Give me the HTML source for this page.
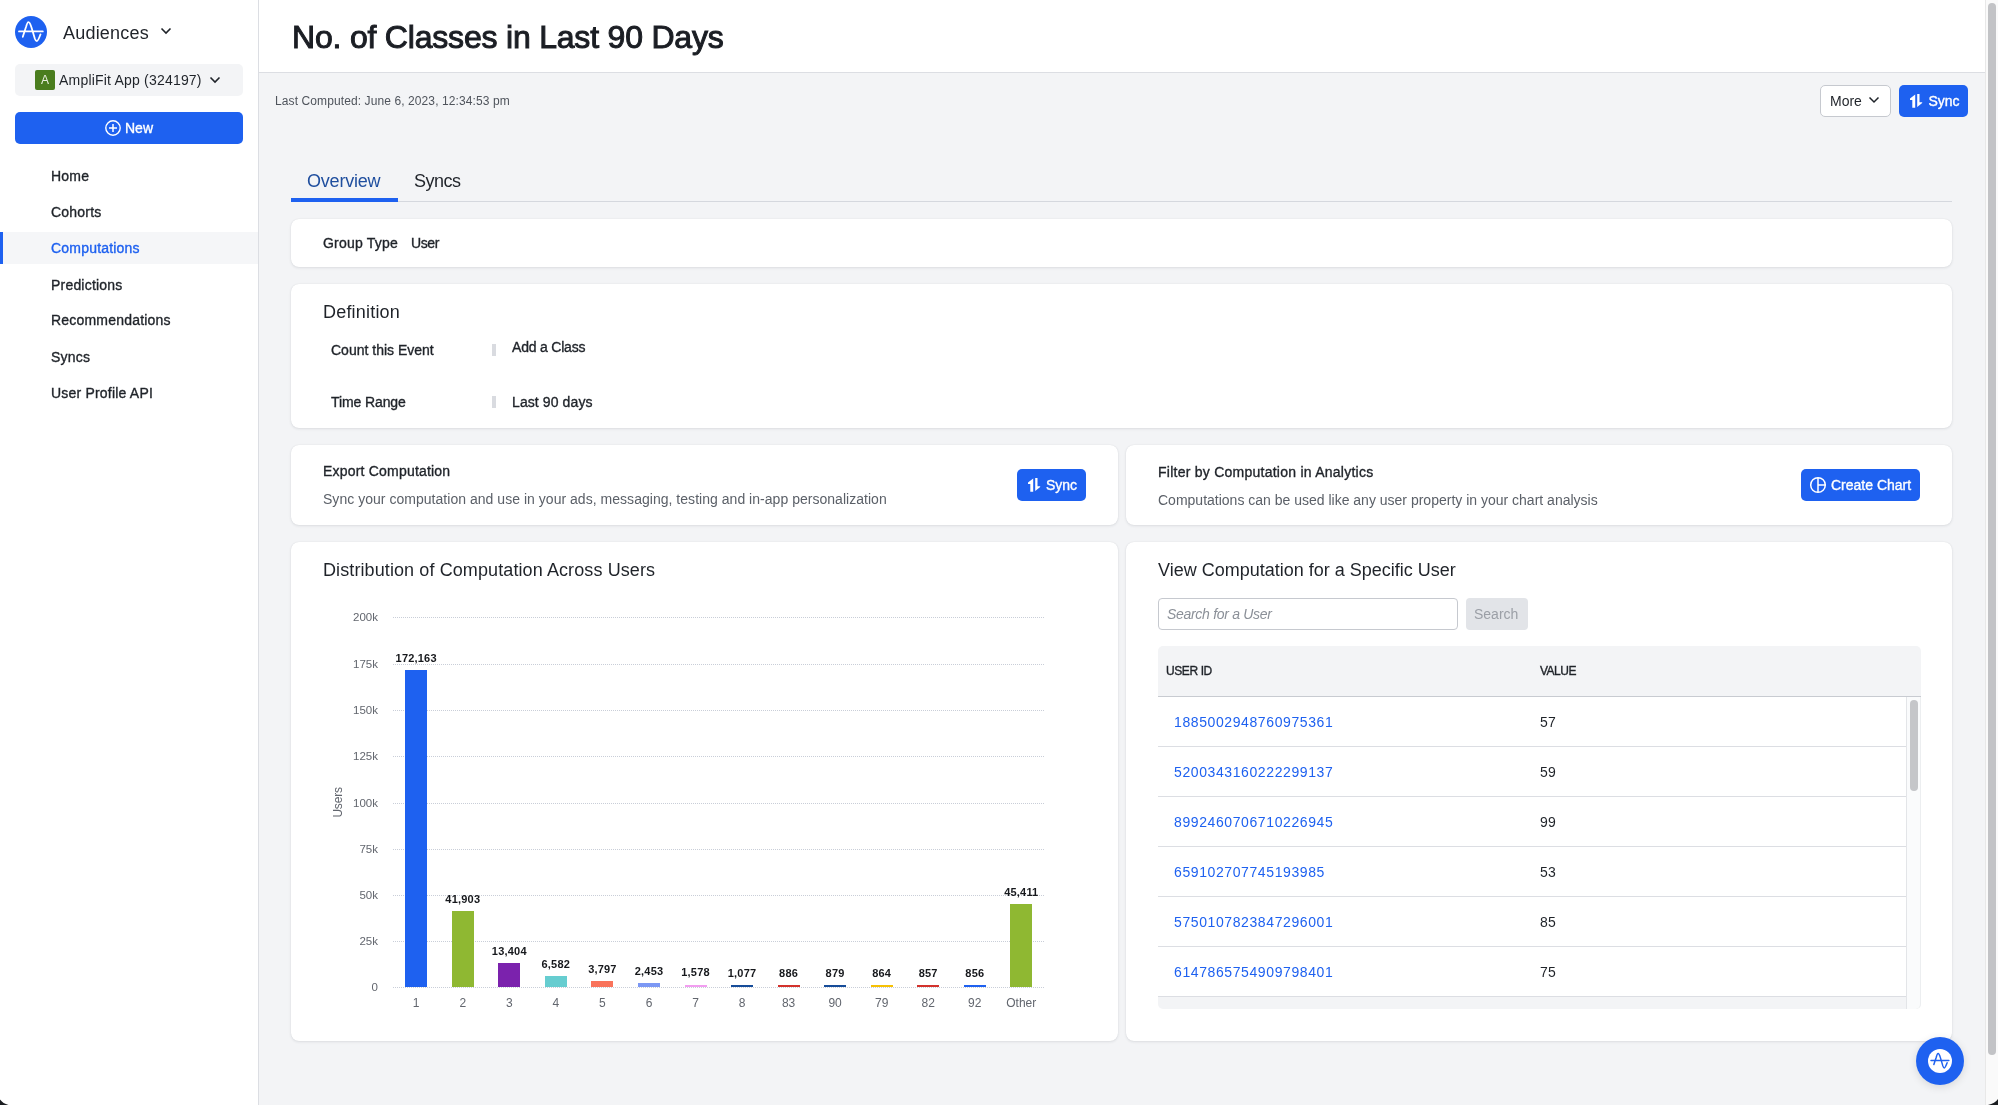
<!DOCTYPE html>
<html><head><meta charset="utf-8">
<style>
*{box-sizing:border-box;margin:0;padding:0}
html,body{width:1998px;height:1105px;overflow:hidden;will-change:transform;background:#f3f4f6;font-family:"Liberation Sans",sans-serif;color:#1f2329}
.a{position:absolute;white-space:nowrap;line-height:1}
.med{-webkit-text-stroke:0.35px currentColor}
#side{position:absolute;left:0;top:0;width:259px;height:1105px;background:#fff;border-right:1px solid #dcdee3}
#hdr{position:absolute;left:259px;top:0;width:1726px;height:73px;background:#fff;border-bottom:1px solid #dcdee3}
.card{position:absolute;background:#fff;border-radius:8px;box-shadow:0 1px 3px rgba(30,40,60,.10),0 0 1px rgba(30,40,60,.12)}
.btn{position:absolute;background:#1e61f0;border-radius:5px;color:#fff}
.nav{position:absolute;left:51px;font-size:14px;line-height:1;color:#1f2329;letter-spacing:0.2px}
.grid{position:absolute;left:393px;width:651px;height:0;border-top:1px dotted #c9ced8}
.yl{position:absolute;right:0;width:60px;text-align:right;font-size:11.5px;color:#62666e;line-height:1}
.bar{position:absolute;width:22px}
.vl{position:absolute;width:60px;text-align:center;font-size:11px;font-weight:bold;color:#16181c;line-height:1;letter-spacing:0.2px}
.xl{position:absolute;width:60px;text-align:center;font-size:12px;color:#62666e;line-height:1}
.row{position:absolute;left:1158px;width:748px;height:50px;border-bottom:1px solid #dcdee3}
.uid{position:absolute;left:16px;font-size:14px;color:#1e61f0;line-height:1;letter-spacing:0.5px}
.val{position:absolute;left:382px;font-size:14px;color:#1f2329;line-height:1;letter-spacing:0.3px}
</style></head>
<body>
<!-- SIDEBAR -->
<div id="side">
  <svg style="position:absolute;left:15px;top:16px" width="32" height="32" viewBox="0 0 32 32">
    <circle cx="16" cy="16" r="16" fill="#1e61f0"/>
    <path d="M4 15.4 H27.8 M7.8 20.8 L11 11 C11.8 8 12.5 6.1 13.5 6.1 C14.8 6.1 15.6 8.5 16.5 11.5 L19.8 22.5 C20.5 24.5 21 25.2 21.8 25.2 C23 25.2 24.5 21 25.5 18.4" stroke="#fff" stroke-width="1.8" fill="none" stroke-linecap="round" stroke-linejoin="round"/>
  </svg>
  <div class="a" style="left:63px;top:23.6px;font-size:18px;color:#1f2329;letter-spacing:0.2px">Audiences</div>
  <svg style="position:absolute;left:160px;top:27px" width="12" height="8" viewBox="0 0 12 8"><path d="M1.5 1.5 L6 6 L10.5 1.5" stroke="#1f2329" stroke-width="1.6" fill="none"/></svg>
  <div style="position:absolute;left:15px;top:64px;width:228px;height:32px;background:#f3f4f6;border-radius:5px"></div>
  <div style="position:absolute;left:35px;top:70px;width:20px;height:20px;background:#4a7d1e;border-radius:2px;color:#e8eee0;font-size:12px;line-height:20px;text-align:center">A</div>
  <div class="a" style="left:59px;top:73.1px;font-size:14px;letter-spacing:0.2px">AmpliFit App (324197)</div>
  <svg style="position:absolute;left:209px;top:76px" width="12" height="8" viewBox="0 0 12 8"><path d="M1.5 1.5 L6 6 L10.5 1.5" stroke="#1f2329" stroke-width="1.6" fill="none"/></svg>
  <div class="btn" style="left:15px;top:112px;width:228px;height:32px;border-radius:5px"></div>
  <svg style="position:absolute;left:105px;top:120px" width="16" height="16" viewBox="0 0 16 16"><circle cx="8" cy="8" r="7.2" stroke="#fff" stroke-width="1.4" fill="none"/><path d="M8 4 V12 M4 8 H12" stroke="#fff" stroke-width="1.5"/></svg>
  <div class="a med" style="left:125px;top:121.1px;font-size:14px;color:#fff">New</div>

  <div style="position:absolute;left:0;top:232px;width:258px;height:32px;background:#f5f6f8"></div>
  <div style="position:absolute;left:0;top:232px;width:3px;height:32px;background:#1e61f0"></div>
  <div class="nav med" style="top:169.1px">Home</div>
  <div class="nav med" style="top:205.3px">Cohorts</div>
  <div class="nav med" style="top:241.3px;color:#1e61f0">Computations</div>
  <div class="nav med" style="top:277.5px">Predictions</div>
  <div class="nav med" style="top:313.4px">Recommendations</div>
  <div class="nav med" style="top:349.6px">Syncs</div>
  <div class="nav med" style="top:386.3px">User Profile API</div>
</div>

<!-- HEADER -->
<div id="hdr"></div>
<div class="a" style="left:292px;top:20.7px;font-size:32px;letter-spacing:-0.2px;color:#1b1e24;-webkit-text-stroke:1px #1b1e24">No. of Classes in Last 90 Days</div>

<div class="a" style="left:275px;top:94.8px;font-size:12px;color:#4f545c;letter-spacing:0.1px">Last Computed: June 6, 2023, 12:34:53 pm</div>

<div style="position:absolute;left:1820px;top:85px;width:71px;height:32px;background:#fff;border:1px solid #c6c9cf;border-radius:5px"></div>
<div class="a" style="left:1830px;top:94.1px;font-size:14px">More</div>
<svg style="position:absolute;left:1868px;top:96px" width="12" height="8" viewBox="0 0 12 8"><path d="M1.5 1.5 L6 6 L10.5 1.5" stroke="#1f2329" stroke-width="1.5" fill="none"/></svg>
<div class="btn" style="left:1899px;top:85px;width:69px;height:32px"></div>
<svg style="position:absolute;left:1910px;top:94px" width="13" height="14" viewBox="0 0 13 14"><path d="M5.2 0.4 L0 4.6 L0 5.9 L2.3 5.9 L2.3 13.8 L5.2 13.8 Z M7.2 0 L9.5 0 L9.5 8.2 L12.2 8.2 L12.2 9 L7.2 13.1 Z" fill="#fff"/></svg>
<div class="a med" style="left:1928.5px;top:94.1px;font-size:14px;color:#fff">Sync</div>

<!-- TABS -->
<div style="position:absolute;left:291px;top:201px;width:1661px;height:1px;background:#d5d8de"></div>
<div style="position:absolute;left:291px;top:198px;width:107px;height:4px;background:#1e61f0"></div>
<div class="a" style="left:307px;top:172.2px;font-size:18px;color:#1f4e9e;letter-spacing:-0.2px">Overview</div>
<div class="a" style="left:414px;top:172.2px;font-size:18px;letter-spacing:-0.5px">Syncs</div>

<!-- GROUP TYPE CARD -->
<div class="card" style="left:291px;top:219px;width:1661px;height:48px"></div>
<div class="a med" style="left:323px;top:235.9px;font-size:14px;letter-spacing:0.2px">Group Type</div>
<div class="a med" style="left:411px;top:235.9px;font-size:14px;letter-spacing:-0.4px">User</div>

<!-- DEFINITION CARD -->
<div class="card" style="left:291px;top:284px;width:1661px;height:144px"></div>
<div class="a" style="left:323px;top:302.6px;font-size:18px;color:#1f2329;letter-spacing:0.2px">Definition</div>
<div class="a med" style="left:331px;top:343.1px;font-size:14px">Count this Event</div>
<div style="position:absolute;left:492px;top:344px;width:4px;height:12px;background:#d9dbe0"></div>
<div class="a med" style="left:512px;top:339.7px;font-size:14px;letter-spacing:-0.2px">Add a Class</div>
<div class="a med" style="left:331px;top:395px;font-size:14px;letter-spacing:-0.1px">Time Range</div>
<div style="position:absolute;left:492px;top:396px;width:4px;height:12px;background:#d9dbe0"></div>
<div class="a med" style="left:512px;top:395px;font-size:14px;letter-spacing:0.1px">Last 90 days</div>

<!-- EXPORT CARD -->
<div class="card" style="left:291px;top:445px;width:827px;height:80px"></div>
<div class="a med" style="left:323px;top:464.1px;font-size:14px;letter-spacing:0.2px">Export Computation</div>
<div class="a" style="left:323px;top:492.1px;font-size:14px;color:#5b6068;letter-spacing:0.03px">Sync your computation and use in your ads, messaging, testing and in-app personalization</div>
<div class="btn" style="left:1017px;top:469px;width:69px;height:32px"></div>
<svg style="position:absolute;left:1028px;top:478px" width="13" height="14" viewBox="0 0 13 14"><path d="M5.2 0.4 L0 4.6 L0 5.9 L2.3 5.9 L2.3 13.8 L5.2 13.8 Z M7.2 0 L9.5 0 L9.5 8.2 L12.2 8.2 L12.2 9 L7.2 13.1 Z" fill="#fff"/></svg>
<div class="a med" style="left:1046px;top:478px;font-size:14px;color:#fff">Sync</div>

<!-- FILTER CARD -->
<div class="card" style="left:1126px;top:445px;width:826px;height:80px"></div>
<div class="a med" style="left:1158px;top:464.6px;font-size:14px;letter-spacing:0.25px">Filter by Computation in Analytics</div>
<div class="a" style="left:1158px;top:492.6px;font-size:14px;color:#5b6068">Computations can be used like any user property in your chart analysis</div>
<div class="btn" style="left:1801px;top:469px;width:119px;height:32px"></div>
<svg style="position:absolute;left:1809px;top:476px" width="18" height="18" viewBox="0 0 18 18"><circle cx="9" cy="9" r="7.3" stroke="#fff" stroke-width="1.5" fill="none"/><path d="M9 1.7 V16.3 M9 9 H16.3" stroke="#fff" stroke-width="1.5"/></svg>
<div class="a med" style="left:1831px;top:478.2px;font-size:14px;color:#fff">Create Chart</div>

<!-- DISTRIBUTION CARD -->
<div class="card" style="left:291px;top:542px;width:827px;height:499px"></div>
<div class="a" style="left:323px;top:561.3px;font-size:18px;letter-spacing:0.1px">Distribution of Computation Across Users</div>
<div class="grid" style="top:617px"></div>
<div class="yl" style="left:318px;top:612.3px">200k</div>
<div class="grid" style="top:664px"></div>
<div class="yl" style="left:318px;top:659.3px">175k</div>
<div class="grid" style="top:710px"></div>
<div class="yl" style="left:318px;top:705.3px">150k</div>
<div class="grid" style="top:756px"></div>
<div class="yl" style="left:318px;top:751.3px">125k</div>
<div class="grid" style="top:803px"></div>
<div class="yl" style="left:318px;top:798.3px">100k</div>
<div class="grid" style="top:849px"></div>
<div class="yl" style="left:318px;top:844.3px">75k</div>
<div class="grid" style="top:895px"></div>
<div class="yl" style="left:318px;top:890.3px">50k</div>
<div class="grid" style="top:941px"></div>
<div class="yl" style="left:318px;top:936.3px">25k</div>
<div class="grid" style="top:987px"></div>
<div class="yl" style="left:318px;top:982.3px">0</div>
<div class="bar" style="left:405.2px;top:670.0px;height:317.0px;background:#1e61f0"></div>
<div class="vl" style="left:386.2px;top:652.7px">172,163</div>
<div class="xl" style="left:386.2px;top:996.7px">1</div>
<div class="bar" style="left:451.8px;top:911.0px;height:76.0px;background:#8fb832"></div>
<div class="vl" style="left:432.8px;top:893.7px">41,903</div>
<div class="xl" style="left:432.8px;top:996.7px">2</div>
<div class="bar" style="left:498.3px;top:963.0px;height:24.0px;background:#7b22ad"></div>
<div class="vl" style="left:479.3px;top:945.7px">13,404</div>
<div class="xl" style="left:479.3px;top:996.7px">3</div>
<div class="bar" style="left:544.8px;top:976.0px;height:11.0px;background:#66cdd0"></div>
<div class="vl" style="left:525.8px;top:958.7px">6,582</div>
<div class="xl" style="left:525.8px;top:996.7px">4</div>
<div class="bar" style="left:591.4px;top:981.0px;height:6.0px;background:#f9735b"></div>
<div class="vl" style="left:572.4px;top:963.7px">3,797</div>
<div class="xl" style="left:572.4px;top:996.7px">5</div>
<div class="bar" style="left:638.0px;top:983.0px;height:4.0px;background:#7c98f4"></div>
<div class="vl" style="left:619.0px;top:965.7px">2,453</div>
<div class="xl" style="left:619.0px;top:996.7px">6</div>
<div class="bar" style="left:684.5px;top:984.5px;height:2.5px;background:#f29ef0"></div>
<div class="vl" style="left:665.5px;top:967.2px">1,578</div>
<div class="xl" style="left:665.5px;top:996.7px">7</div>
<div class="bar" style="left:731.0px;top:985.0px;height:2.0px;background:#164c99"></div>
<div class="vl" style="left:712.0px;top:967.7px">1,077</div>
<div class="xl" style="left:712.0px;top:996.7px">8</div>
<div class="bar" style="left:777.6px;top:985.0px;height:2.0px;background:#d3322c"></div>
<div class="vl" style="left:758.6px;top:967.7px">886</div>
<div class="xl" style="left:758.6px;top:996.7px">83</div>
<div class="bar" style="left:824.1px;top:985.0px;height:2.0px;background:#164c99"></div>
<div class="vl" style="left:805.1px;top:967.7px">879</div>
<div class="xl" style="left:805.1px;top:996.7px">90</div>
<div class="bar" style="left:870.7px;top:985.0px;height:2.0px;background:#f7c104"></div>
<div class="vl" style="left:851.7px;top:967.7px">864</div>
<div class="xl" style="left:851.7px;top:996.7px">79</div>
<div class="bar" style="left:917.2px;top:985.0px;height:2.0px;background:#d3322c"></div>
<div class="vl" style="left:898.2px;top:967.7px">857</div>
<div class="xl" style="left:898.2px;top:996.7px">82</div>
<div class="bar" style="left:963.8px;top:985.0px;height:2.0px;background:#1e61f0"></div>
<div class="vl" style="left:944.8px;top:967.7px">856</div>
<div class="xl" style="left:944.8px;top:996.7px">92</div>
<div class="bar" style="left:1010.3px;top:904.0px;height:83.0px;background:#8fb832"></div>
<div class="vl" style="left:991.3px;top:886.7px">45,411</div>
<div class="xl" style="left:991.3px;top:996.7px">Other</div>
<div class="a" style="left:322.4px;top:795.5px;font-size:12px;letter-spacing:-0.2px;color:#62666e;transform:rotate(-90deg);transform-origin:15.6px 6px">Users</div>

<!-- VIEW COMPUTATION CARD -->
<div class="card" style="left:1126px;top:542px;width:826px;height:499px"></div>
<div class="a" style="left:1158px;top:560.5px;font-size:18px">View Computation for a Specific User</div>
<div style="position:absolute;left:1158px;top:598px;width:300px;height:32px;border:1px solid #c6c9cf;border-radius:4px;background:#fff"></div>
<div class="a" style="left:1167px;top:607.1px;font-size:14px;font-style:italic;color:#8b9098;letter-spacing:-0.3px">Search for a User</div>
<div style="position:absolute;left:1466px;top:598px;width:62px;height:32px;background:#e2e4e8;border-radius:4px"></div>
<div class="a" style="left:1474px;top:607.1px;font-size:14px;color:#9b9fa6">Search</div>

<div style="position:absolute;left:1158px;top:646px;width:763px;height:51px;background:#f3f4f6;border-radius:5px 5px 0 0;border-bottom:1px solid #c8cbd1"></div>
<div class="a med" style="left:1166px;top:664.8px;font-size:12px;letter-spacing:-0.4px">USER ID</div>
<div class="a med" style="left:1540px;top:664.8px;font-size:12px;letter-spacing:-0.5px">VALUE</div>
<div class="row" style="top:697px"></div>
<div class="a" style="left:1174px;top:715.0px;font-size:14px;color:#1e61f0;letter-spacing:0.6px">1885002948760975361</div>
<div class="a" style="left:1540px;top:715.0px;font-size:14px;letter-spacing:0.3px">57</div>
<div class="row" style="top:747px"></div>
<div class="a" style="left:1174px;top:765.0px;font-size:14px;color:#1e61f0;letter-spacing:0.6px">5200343160222299137</div>
<div class="a" style="left:1540px;top:765.0px;font-size:14px;letter-spacing:0.3px">59</div>
<div class="row" style="top:797px"></div>
<div class="a" style="left:1174px;top:815.0px;font-size:14px;color:#1e61f0;letter-spacing:0.6px">8992460706710226945</div>
<div class="a" style="left:1540px;top:815.0px;font-size:14px;letter-spacing:0.3px">99</div>
<div class="row" style="top:847px"></div>
<div class="a" style="left:1174px;top:865.0px;font-size:14px;color:#1e61f0;letter-spacing:0.6px">659102707745193985</div>
<div class="a" style="left:1540px;top:865.0px;font-size:14px;letter-spacing:0.3px">53</div>
<div class="row" style="top:897px"></div>
<div class="a" style="left:1174px;top:915.0px;font-size:14px;color:#1e61f0;letter-spacing:0.6px">5750107823847296001</div>
<div class="a" style="left:1540px;top:915.0px;font-size:14px;letter-spacing:0.3px">85</div>
<div class="row" style="top:947px"></div>
<div class="a" style="left:1174px;top:965.0px;font-size:14px;color:#1e61f0;letter-spacing:0.6px">6147865754909798401</div>
<div class="a" style="left:1540px;top:965.0px;font-size:14px;letter-spacing:0.3px">75</div>
<div style="position:absolute;left:1158px;top:997px;width:763px;height:12px;background:#f3f4f6;border-radius:0 0 5px 5px"></div>
<div style="position:absolute;left:1906px;top:697px;width:15px;height:312px;background:#fafbfc;border-left:1px solid #e3e5e8;border-right:1px solid #eceef0;border-radius:0 0 5px 0"></div>
<div style="position:absolute;left:1910px;top:700px;width:8px;height:91px;background:#c5c6c9;border-radius:4px"></div>

<!-- FLOATING BUTTON -->
<div style="position:absolute;left:1916px;top:1037px;width:48px;height:48px;border-radius:50%;background:#1e61f0;box-shadow:0 2px 8px rgba(0,0,0,.12)"></div>
<svg style="position:absolute;left:1928px;top:1049px" width="24" height="24" viewBox="0 0 32 32">
  <circle cx="16" cy="16" r="16" fill="#fff"/>
  <path d="M4 15.4 H27.8 M7.8 20.8 L11 11 C11.8 8 12.5 6.1 13.5 6.1 C14.8 6.1 15.6 8.5 16.5 11.5 L19.8 22.5 C20.5 24.5 21 25.2 21.8 25.2 C23 25.2 24.5 21 25.5 18.4" stroke="#1e61f0" stroke-width="2" fill="none" stroke-linecap="round"/>
</svg>

<!-- PAGE SCROLLBAR -->
<div style="position:absolute;left:1985px;top:0;width:13px;height:1105px;background:#fafafa;border-left:1px solid #e8e8e8"></div>
<div style="position:absolute;left:1988px;top:3px;width:8px;height:1052px;background:#c2c3c6;border-radius:4px"></div>
<svg style="position:absolute;left:0;top:1095px" width="1998" height="10" viewBox="0 1095 1998 10"><path d="M0 1099.5 Q3 1103.5 8.5 1105 L0 1105 Z M1998 1099 Q1995 1103.5 1988 1105 L1998 1105 Z" fill="#1b1d21"/></svg>
</body></html>
